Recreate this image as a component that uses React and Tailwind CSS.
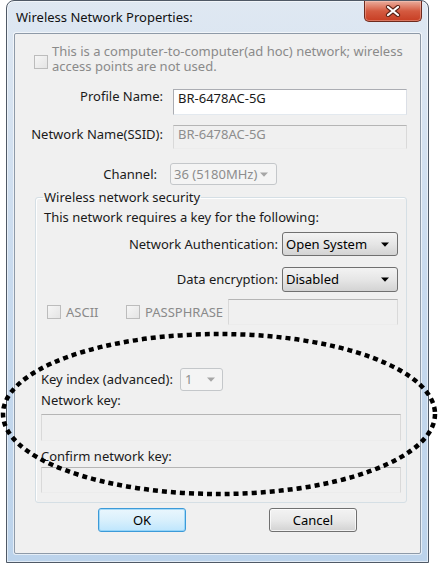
import React from "react";

function Arrow({ color = "#000000" }) {
  return (
    <svg width="8" height="5" viewBox="0 0 8 5" className="shrink-0">
      <path d="M0 0.5h8L4 4.8z" fill={color} />
    </svg>
  );
}

function Checkbox() {
  return (
    <div className="w-[14px] h-[14px] shrink-0 border border-[#bcbcbc] bg-gradient-to-br from-[#f6f6f6] to-[#e4e4e4]" />
  );
}

function CloseButton() {
  return (
    <div className="w-[58px] h-[21px] mr-[6px] rounded-b-[5px] border border-t-0 border-[#6e2a1d] bg-gradient-to-b from-[#e9ac9c] via-[#d45a40] to-[#c73d22] shadow-[inset_0_0_0_1px_rgba(255,220,210,0.35)] flex items-center justify-center">
      <svg width="16" height="12" viewBox="0 0 16 12">
        <path d="M3 2L13 10M13 2L3 10" stroke="#5b2317" strokeWidth="4.2" strokeLinecap="round" />
        <path d="M3 2L13 10M13 2L3 10" stroke="#ffffff" strokeWidth="2.2" strokeLinecap="round" />
      </svg>
    </div>
  );
}

export default function App() {
  return (
    <div className="relative w-[439px] h-[563px] bg-white overflow-hidden font-['Noto_Sans',sans-serif] text-[13px] leading-[15px] text-[#1a1a1a]">
      <div className="ml-[6px] w-[423px] h-[563px] rounded-t-[8px] border border-[#4f5966] bg-gradient-to-b from-[#dfe8f2] via-[#c8daee] to-[#bcd3eb] shadow-[inset_0_0_0_1px_rgba(255,255,255,0.55)] flex flex-col">
        {/* Title bar */}
        <div className="h-[32px] flex items-start justify-between pl-[9px]">
          <div className="pt-[9px] text-[#111]">Wireless Network Properties:</div>
          <CloseButton />
        </div>

        {/* Content panel */}
        <div className="ml-[7px] mr-[7px] mb-[8px] flex-1 border border-[#8e9aa8] rounded-[2px] bg-[#f0f0f0] shadow-[0_0_0_1px_rgba(255,255,255,0.6)] flex flex-col">
          {/* ad hoc */}
          <div className="mt-[10px] ml-[19px] flex items-start">
            <div className="mt-[11px]">
              <Checkbox />
            </div>
            <div className="ml-[4px] text-[#8a8a8a]">
              This is a computer-to-computer(ad hoc) network; wireless
              <br />
              access points are not used.
            </div>
          </div>

          {/* Profile Name */}
          <div className="mt-[15px] flex items-start">
            <div className="w-[148px] text-right">Profile Name:</div>
            <div className="ml-[10px] w-[234px] h-[26px] bg-white border border-[#abadb3] border-r-[#dbdfe6] border-b-[#e3e9ef] pl-[4px] pt-[1px]">
              BR-6478AC-5G
            </div>
          </div>

          {/* SSID */}
          <div className="mt-[10px] flex items-start">
            <div className="w-[148px] text-right pt-[2px]">Network Name(SSID):</div>
            <div className="ml-[10px] w-[234px] h-[24px] border border-[#b5b5b5] border-x-[#d9d9d9] border-b-[#ececec] pl-[4px] pt-[1px] text-[#8d8d8d]">
              BR-6478AC-5G
            </div>
          </div>

          {/* Channel */}
          <div className="mt-[14px] flex items-center">
            <div className="w-[142px] text-right">Channel:</div>
            <div className="ml-[13px] w-[107px] h-[22px] rounded-[3px] border border-[#c4c7ca] bg-[#f4f4f4] flex items-center justify-between pl-[3px] pr-[8px] text-[#8d8d8d]">
              <span>36 (5180MHz)</span>
              <Arrow color="#a6a6a6" />
            </div>
          </div>

          {/* Wireless network security */}
          <fieldset className="mt-[5px] ml-[20px] w-[372px] border border-[#d5dfe5] rounded-[3px] p-0 pb-[9px] shadow-[inset_1px_1px_0_rgba(255,255,255,0.9)] flex flex-col">
            <legend className="ml-[7px] px-[1px] leading-[15px]">Wireless network security</legend>
            <div className="mt-[5px] pl-[8px]">This network requires a key for the following:</div>

            <div className="mt-[7px] flex items-center">
              <div className="w-[242px] text-right">Network Authentication:</div>
              <div className="ml-[4px] w-[116px] h-[24px] rounded-[3px] border border-[#707070] bg-gradient-to-b from-[#f3f3f3] via-[#e6e6e6] to-[#d3d3d3] flex items-center justify-between pl-[3px] pr-[8px] text-black">
                <span>Open System</span>
                <Arrow />
              </div>
            </div>

            <div className="mt-[11px] flex items-center">
              <div className="w-[242px] text-right">Data encryption:</div>
              <div className="ml-[4px] w-[116px] h-[25px] rounded-[3px] border border-[#707070] bg-gradient-to-b from-[#f3f3f3] via-[#e6e6e6] to-[#d3d3d3] flex items-center justify-between pl-[3px] pr-[8px] text-black">
                <span>Disabled</span>
                <Arrow />
              </div>
            </div>

            <div className="mt-[7px] flex items-center">
              <div className="ml-[11px] w-[79px] flex items-center">
                <Checkbox />
                <span className="ml-[5px] text-[#8a8a8a]">ASCII</span>
              </div>
              <div className="w-[102px] flex items-center">
                <Checkbox />
                <span className="ml-[5px] text-[#8a8a8a]">PASSPHRASE</span>
              </div>
              <div className="w-[170px] h-[26px] border border-[#b5b5b5] border-x-[#d9d9d9] border-b-[#ececec]" />
            </div>

            <div className="mt-[43px] ml-[5px] flex items-center">
              <div className="w-[139px]">Key index (advanced):</div>
              <div className="w-[43px] h-[23px] rounded-[3px] border border-[#c4c7ca] bg-[#f4f4f4] flex items-center justify-between pl-[4px] pr-[7px] text-[#8d8d8d]">
                <span>1</span>
                <Arrow color="#a6a6a6" />
              </div>
            </div>

            <div className="mt-[2px] ml-[5px]">Network key:</div>
            <div className="mt-[6px] ml-[5px] w-[360px] h-[27px] border border-[#b5b5b5] border-x-[#d9d9d9] border-b-[#ececec]" />

            <div className="mt-[8px] ml-[5px]">Confirm network key:</div>
            <div className="mt-[3px] ml-[5px] w-[360px] h-[26px] border border-[#b5b5b5] border-x-[#d9d9d9] border-b-[#ececec]" />
          </fieldset>

          {/* Buttons */}
          <div className="mt-[5px] ml-[83px] flex items-center gap-[83px]">
            <div className="w-[88px] h-[24px] rounded-[3px] border border-[#3c9ad8] bg-gradient-to-b from-[#eaf6fd] via-[#d9f0fc] to-[#bee6fd] shadow-[inset_0_0_0_1px_rgba(120,200,245,0.6)] flex items-center justify-center text-black">
              OK
            </div>
            <div className="w-[88px] h-[24px] rounded-[3px] border border-[#707070] bg-gradient-to-b from-[#f3f3f3] via-[#e9e9e9] to-[#d2d2d2] shadow-[inset_0_0_0_1px_rgba(255,255,255,0.7)] flex items-center justify-center text-black">
              Cancel
            </div>
          </div>
        </div>
      </div>

      {/* Dotted annotation ellipse */}
      <svg className="absolute left-0 top-0 pointer-events-none" width="439" height="563" viewBox="0 0 439 563">
        <ellipse cx="219" cy="414" rx="216" ry="80" fill="none" stroke="#000" strokeWidth="4.5" strokeDasharray="5 4" />
      </svg>
    </div>
  );
}
